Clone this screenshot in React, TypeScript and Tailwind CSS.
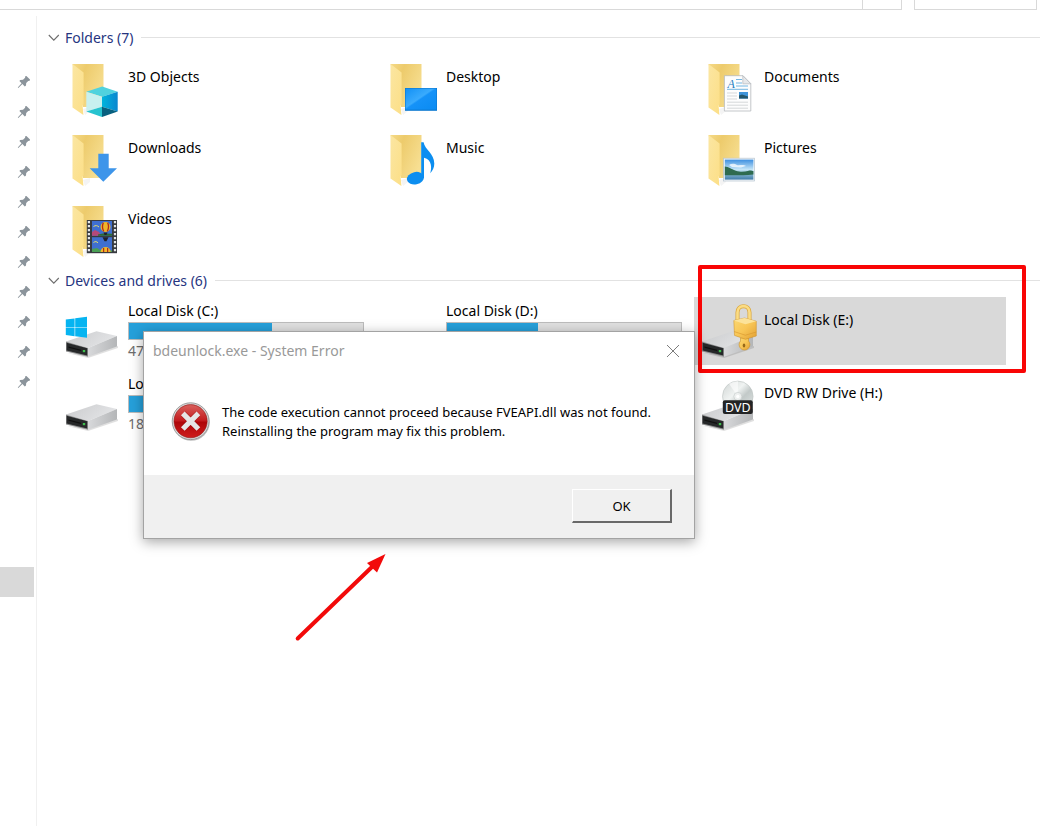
import React from "react";

type IconProps = { children?: React.ReactNode };

function TileSvg({ children }: IconProps) {
  return (
    <svg width="64" height="68" viewBox="0 0 64 68" className="shrink-0" aria-hidden="true">
      {children}
    </svg>
  );
}

function Folder({ children }: IconProps) {
  return (
    <TileSvg>
      <path d="M19 55l7-2v4l-5 4z" fill="#f4f4f4" />
      <path d="M8.5 10H39.5V53H19z" fill="url(#folderBack)" />
      <path d="M8.5 10L19.6 18.5V50L18.6 51.5L19.4 61L8.5 53.5z" fill="url(#folderFront)" />
      {children}
    </TileSvg>
  );
}

function DriveBody() {
  return (
    <>
      <path d="M3 56L24 61L54 51V49L24 58z" fill="#000" opacity="0.12" />
      <path d="M2 44.5L32.5 34.2L53 39L24 51z" fill="url(#driveTop)" />
      <path d="M24 51L53 39V49.5L24 59.7z" fill="url(#driveSide)" />
      <path d="M2 44.5L24 51V59.7L2 54.5z" fill="#8d8e8f" />
      <path d="M2.6 45.8L23.2 51.2V58.4L2.6 53.5z" fill="#262829" />
      <path d="M4.5 49.5L17 52.7V54L4.5 50.8z" fill="#111" />
      <rect x="18.8" y="53" width="2.4" height="2.2" fill="#3fbf4e" />
    </>
  );
}

function Defs() {
  return (
    <svg width="0" height="0" className="absolute" aria-hidden="true">
      <defs>
        <linearGradient id="folderBack" x1="0" y1="0" x2="1" y2="0.6">
          <stop offset="0" stopColor="#f5da88" />
          <stop offset="0.35" stopColor="#edcb6c" />
          <stop offset="1" stopColor="#f7df92" />
        </linearGradient>
        <linearGradient id="folderFront" x1="0" y1="0" x2="1" y2="1">
          <stop offset="0" stopColor="#fbe6a2" />
          <stop offset="1" stopColor="#fcdf87" />
        </linearGradient>
        <linearGradient id="driveTop" x1="0" y1="0" x2="1" y2="0.4">
          <stop offset="0" stopColor="#c9cacc" />
          <stop offset="1" stopColor="#e3e4e6" />
        </linearGradient>
        <linearGradient id="driveSide" x1="0" y1="0" x2="1" y2="0">
          <stop offset="0" stopColor="#d8d9db" />
          <stop offset="1" stopColor="#b4b6b8" />
        </linearGradient>
        <linearGradient id="cubeRight" x1="0" y1="0" x2="1" y2="0">
          <stop offset="0" stopColor="#00b4dc" />
          <stop offset="1" stopColor="#0a86cf" />
        </linearGradient>
        <linearGradient id="screen" x1="0" y1="0" x2="1" y2="1">
          <stop offset="0" stopColor="#1290f5" />
          <stop offset="0.45" stopColor="#3aabfd" />
          <stop offset="0.5" stopColor="#1592f8" />
          <stop offset="1" stopColor="#0a8bf2" />
        </linearGradient>
        <linearGradient id="sky" x1="0" y1="0" x2="0" y2="1">
          <stop offset="0" stopColor="#3d8fe0" />
          <stop offset="0.5" stopColor="#c6e6f8" />
          <stop offset="0.62" stopColor="#9cc8dd" />
          <stop offset="1" stopColor="#3f7ba8" />
        </linearGradient>
        <linearGradient id="gold" x1="0" y1="0" x2="1" y2="1">
          <stop offset="0" stopColor="#fbd873" />
          <stop offset="0.5" stopColor="#f8c656" />
          <stop offset="1" stopColor="#e2a033" />
        </linearGradient>
        <linearGradient id="disc" x1="0" y1="0" x2="1" y2="1">
          <stop offset="0" stopColor="#cfd4d3" />
          <stop offset="0.4" stopColor="#f0f3f2" />
          <stop offset="0.6" stopColor="#c2c9c8" />
          <stop offset="1" stopColor="#e4e8e7" />
        </linearGradient>
        <linearGradient id="errorRed" x1="0" y1="0" x2="0" y2="1">
          <stop offset="0" stopColor="#d9605c" />
          <stop offset="0.5" stopColor="#c2191c" />
          <stop offset="0.52" stopColor="#ad0508" />
          <stop offset="1" stopColor="#cf1d1d" />
        </linearGradient>
      </defs>
    </svg>
  );
}

function ObjectsIcon() {
  return (
    <Folder>
      <path d="M22.3 37.7L38.2 32.6L53.7 37.7L38 42.7z" fill="#4fd2de" />
      <path d="M22.3 37.7L38 42.7V52.7L22.3 57.6z" fill="#c8f0ef" />
      <path d="M53.7 37.7L38 42.7V52.7L53.7 57.6z" fill="url(#cubeRight)" />
      <path d="M22.3 57.6L38 52.7V63z" fill="#27c3cf" />
      <path d="M53.7 57.6L38 52.7V63z" fill="#08607f" />
    </Folder>
  );
}

function DesktopIcon() {
  return (
    <Folder>
      <rect x="23" y="34" width="32" height="22.8" fill="#0b78d0" />
      <rect x="23.6" y="34.6" width="30.8" height="21" fill="url(#screen)" />
    </Folder>
  );
}

function DocumentsIcon() {
  return (
    <Folder>
      <path d="M24.4 21.7H43L50.8 29.6V57H24.4z" fill="#fdfdfd" stroke="#b5b9bd" strokeWidth="0.8" />
      <path d="M42.8 21.7V29.8H50.8z" fill="#e6e8ea" stroke="#b5b9bd" strokeWidth="0.7" />
      <text x="27.5" y="33.5" fontFamily="Liberation Serif, serif" fontStyle="italic" fontSize="12" fill="#1e7fc0">
        A
      </text>
      <path d="M36 25.5h6M36 29h6M36 32h12M27 35.3h21" stroke="#4fa3da" strokeWidth="0.8" />
      <path d="M27 39h10M27 42h10M27 45h10M27 48.2h21M27 51.2h21M27 54.2h21" stroke="#c4c7ca" strokeWidth="0.7" />
      <rect x="39" y="38" width="9" height="6.6" fill="#3f94da" />
      <path d="M39 41.6l3-1 6 2v2h-9z" fill="#24566b" />
    </Folder>
  );
}

function DownloadsIcon() {
  return (
    <Folder>
      <path d="M34.3 28.7H44.7V43.3H53L39.3 56.8L25.7 43.3H34.3z" fill="#3d95ea" />
    </Folder>
  );
}

function MusicIcon() {
  return (
    <Folder>
      <ellipse cx="33.4" cy="53.2" rx="8.6" ry="6.2" transform="rotate(-12 33.4 53.2)" fill="#0c8ef0" />
      <path
        d="M39.2 17.3H41.6C42.6 24.5 52.3 28.5 52.3 38.5C52.3 42.6 50.6 46 48.2 48.2C49.8 43.6 50.3 34.6 42 32.8V53H39.2z"
        fill="#0c8ef0"
      />
    </Folder>
  );
}

function PicturesIcon() {
  return (
    <Folder>
      <rect x="23.6" y="33.2" width="31" height="22.8" fill="#f5f8fb" stroke="#b4c3cf" strokeWidth="0.7" />
      <rect x="24.8" y="34.6" width="28.6" height="20" fill="url(#sky)" />
      <path d="M29 40c3-2 6-1 8 0s6-1 9 1l-5 1.5-9-.5z" fill="#fff" opacity="0.75" />
      <path d="M24.8 41.5c4 .2 6 2.5 11 4.2s9 1 12 .2 3.5-.4 5.6.2V49.5c-10 1-18 .8-28.6.8z" fill="#2f6b4f" />
    </Folder>
  );
}

function VideosIcon() {
  return (
    <Folder>
      <rect x="22.8" y="24" width="30.2" height="33.2" fill="#383b40" />
      <path d="M24.9 25v32M51 25v32" stroke="#e4e6e8" strokeWidth="2.2" strokeDasharray="2.2 1.8" />
      <rect x="28" y="25" width="20" height="14.8" fill="#3f6fd0" />
      <rect x="28" y="41.2" width="20" height="14.8" fill="#3f6fd0" />
      <path d="M28 36l3-2 4 2 2 3.8H28z" fill="#b6497a" />
      <path d="M34 38.4l5-1 9 .4v2H34z" fill="#2b6b33" />
      <path d="M28 53l5-1 3 2 12 .6V56H28z" fill="#4a9f55" />
      <circle cx="41.5" cy="31" r="5" fill="#efb62a" />
      <path d="M39.3 26.8c-1 2.4-1 6 .4 8.6M43.7 26.8c1 2.4 1 6-.4 8.6" stroke="#b32a1a" strokeWidth="1.3" fill="none" />
      <path d="M39.5 36.5h4l-1 2.4h-2z" fill="#20222a" />
      <path d="M38.5 41.2h6l-2 4h-2z" fill="#20222a" />
      <path d="M36.6 56a5 5 0 0 1 10 0z" fill="#efb62a" />
      <path d="M39.6 52v4M43.6 52v4" stroke="#b32a1a" strokeWidth="1.2" />
      <path d="M29.5 30.5c2-1.4 4-1 5.5.5M29.5 46.5c2-1.4 3-1 4.5.3" stroke="#e8e06a" strokeWidth="1" fill="none" />
    </Folder>
  );
}

function DriveIcon() {
  return (
    <TileSvg>
      <DriveBody />
    </TileSvg>
  );
}

function WindowsDriveIcon() {
  return (
    <TileSvg>
      <DriveBody />
      <path d="M1.8 22.5L10.6 21.4V29.9H1.8zM11.2 21.3L23 19.8V29.9H11.2zM1.8 30.6H10.6V39.2L1.8 38zM11.2 30.6H23V40.8L11.2 39.3z" fill="#06b4f1" />
    </TileSvg>
  );
}

function LockedDriveIcon() {
  return (
    <TileSvg>
      <DriveBody />
      <path d="M37.5 27V15.5c0-8.5 12-8.5 12 0V25" fill="none" stroke="#dba63a" strokeWidth="4" />
      <path d="M37.5 27V15.5c0-8.5 12-8.5 12 0V25" fill="none" stroke="#fbdc84" strokeWidth="2.6" />
      <path d="M40.5 41h8v3a5.4 5.4 0 1 1-8 0z" fill="url(#gold)" stroke="#cf9227" strokeWidth="0.6" />
      <ellipse cx="44" cy="48.5" rx="1.3" ry="2" fill="#97691a" />
      <path d="M33.8 23.5L44.5 21L56.3 24.2V39L45.5 42.3L34.5 38.4z" fill="url(#gold)" stroke="#c98d25" strokeWidth="0.5" />
      <path d="M33.8 23.5L44.5 21L56.3 24.2L45.4 27.2z" fill="#fce39a" />
      <path d="M34.2 34.6L45.4 38.2L56.3 35" fill="none" stroke="#d6962b" strokeWidth="0.6" />
    </TileSvg>
  );
}

function DvdDriveIcon() {
  return (
    <TileSvg>
      <DriveBody />
      <circle cx="37.8" cy="26.4" r="15.3" fill="url(#disc)" stroke="#bcc2c1" strokeWidth="0.6" />
      <path d="M37.8 26.4L29 13.8a15.3 15.3 0 0 1 9-2.6z" fill="#fff" opacity="0.6" />
      <circle cx="37.8" cy="26.4" r="4" fill="#eef1f0" stroke="#c3c8c7" strokeWidth="0.6" />
      <circle cx="37.8" cy="26.4" r="1.6" fill="#fff" />
      <rect x="22.8" y="30.2" width="30" height="13.8" rx="2" fill="#232425" />
      <text x="37.8" y="41.6" textAnchor="middle" fontFamily="Noto Sans, sans-serif" fontSize="12.5" fill="#fff">
        DVD
      </text>
    </TileSvg>
  );
}

function PinIcon() {
  return (
    <svg width="14" height="14" viewBox="0 0 14 14" aria-hidden="true">
      <path
        d="M8.2 1.2L9.4 .9L13 4.6L12.7 5.8L11.2 5.9L9.2 8L9 10.6L7.8 11.4L5.4 9L1.6 12.8L.9 12.9L1 12.2L4.6 8.2L2.4 6L3.2 4.9L6 4.7L8.1 2.7z"
        fill="#8b949b"
      />
    </svg>
  );
}

function ErrorIcon() {
  return (
    <svg width="40" height="40" viewBox="0 0 40 40" className="shrink-0" aria-hidden="true">
      <circle cx="20.2" cy="20.2" r="18.6" fill="#000" opacity="0.25" />
      <circle cx="19.6" cy="19.2" r="18.4" fill="#dcdcdc" stroke="#8b8b8b" strokeWidth="0.8" />
      <circle cx="19.6" cy="19.2" r="16.6" fill="url(#errorRed)" stroke="#8e1010" strokeWidth="0.6" />
      <path d="M12.2 11.8L27 26.6M27 11.8L12.2 26.6" stroke="#8f0a0a" strokeWidth="6.4" opacity="0.5" />
      <path d="M11.8 11.4L27.4 27M27.4 11.4L11.8 27" stroke="#e6e6e6" strokeWidth="5.2" />
    </svg>
  );
}

const folders = [
  { name: "3D Objects", Icon: ObjectsIcon },
  { name: "Desktop", Icon: DesktopIcon },
  { name: "Documents", Icon: DocumentsIcon },
  { name: "Downloads", Icon: DownloadsIcon },
  { name: "Music", Icon: MusicIcon },
  { name: "Pictures", Icon: PicturesIcon },
  { name: "Videos", Icon: VideosIcon },
];

type Drive = {
  name: string;
  Icon: () => React.JSX.Element;
  used?: number;
  free?: string;
  selected?: boolean;
};

const drives: Drive[] = [
  { name: "Local Disk (C:)", Icon: WindowsDriveIcon, used: 61, free: "47" },
  { name: "Local Disk (D:)", Icon: DriveIcon, used: 39 },
  { name: "Local Disk (E:)", Icon: LockedDriveIcon, selected: true },
  { name: "Lo", Icon: DriveIcon, used: 50, free: "18" },
  { name: "", Icon: DriveIcon, used: 50 },
  { name: "DVD RW Drive (H:)", Icon: DvdDriveIcon },
];

function GroupHeader({ title }: { title: string }) {
  return (
    <div className="flex h-[33px] items-center pr-[6px] pl-[11px]">
      <svg width="12" height="8" viewBox="0 0 12 8" className="mr-[5px]" aria-hidden="true">
        <path d="M.8 1L5.8 6.2L10.8 1" fill="none" stroke="#6d6d6d" strokeWidth="1.1" />
      </svg>
      <h2 className="text-[#26357f]">{title}</h2>
      <div className="ml-2 h-px flex-1 bg-[#e2e2e2]" />
    </div>
  );
}

function DriveTile({ name, Icon, used, free, selected }: Drive) {
  return (
    <li className={selected ? "relative flex h-[68px] bg-[#d9d9d9] px-[6px]" : "flex h-[68px] px-[6px]"}>
      <Icon />
      {used === undefined ? (
        <span className="pt-[13px]">{name}</span>
      ) : (
        <div className="flex-1 pt-1">
          <div className="h-5">{name}</div>
          <div className="mt-px h-[18px] border border-[#bcbcbc] bg-[#e0e0e0]">
            <div className="h-full bg-[#26a0da]" style={{ width: `${used}%` }} />
          </div>
          <div className="mt-px text-[#6d6d6d]">{free}</div>
        </div>
      )}
      {selected && (
        <div className="pointer-events-none absolute -top-8 -right-5 -bottom-2 left-1 rounded-xs border-4 border-[#f90505]" />
      )}
    </li>
  );
}

function ErrorDialog() {
  return (
    <div
      role="dialog"
      aria-labelledby="dialog-title"
      className="absolute top-[331px] left-[143px] w-[552px] border border-[#a3a3a3] bg-white shadow-[0_3px_12px_rgba(0,0,0,0.35)]"
    >
      <div className="flex h-[38px] items-center justify-between pr-[14px] pl-[9px]">
        <h1 id="dialog-title" className="text-[#999]">
          bdeunlock.exe - System Error
        </h1>
        <button type="button" aria-label="Close">
          <svg width="14" height="14" viewBox="0 0 14 14" aria-hidden="true">
            <path d="M1 1L13 13M13 1L1 13" stroke="#7c7c7c" strokeWidth="1" />
          </svg>
        </button>
      </div>
      <div className="flex h-[105px] gap-[11px] pt-8 pl-[27px]">
        <ErrorIcon />
        <p className="pt-px text-[13px] leading-[19px] text-black">
          The code execution cannot proceed because FVEAPI.dll was not found.
          <br />
          Reinstalling the program may fix this problem.
        </p>
      </div>
      <div className="flex h-[63px] justify-end bg-[#f0f0f0] pt-[14px] pr-[22px]">
        <button
          type="button"
          className="h-[34px] w-[100px] border-t border-r-2 border-b-2 border-l border-t-white border-r-[#696969] border-b-[#696969] border-l-white bg-[#f0f0f0] text-[13px] text-black"
        >
          OK
        </button>
      </div>
    </div>
  );
}

export default function App() {
  return (
    <div className="relative flex min-h-screen flex-col bg-white font-['Noto_Sans',sans-serif] text-[14px] leading-5 text-black">
      <Defs />
      <header className="flex h-[10px] gap-3 pr-[9px]">
        <div className="flex flex-1 justify-end border-r border-b border-[#d9d9d9]">
          <div className="w-[39px] border-l border-[#d9d9d9]" />
        </div>
        <div className="w-[123px] border-x border-b border-[#d9d9d9]" />
      </header>

      <div className="flex flex-1">
        <aside className="mt-[6px] w-[37px] border-r border-[#f0f0f0]">
          <ul className="pt-[51px]">
            {Array.from({ length: 11 }, (_, i) => (
              <li key={i} className="flex h-[30px] items-center pl-[17px]">
                <PinIcon />
              </li>
            ))}
          </ul>
          <div className="mt-[170px] mr-[2px] h-[30px] bg-[#d9d9d9]" />
        </aside>

        <main className="flex-1 pt-[11px]">
          <GroupHeader title="Folders (7)" />
          <ul className="grid grid-cols-[repeat(auto-fill,312px)] gap-x-[6px] gap-y-[3px] pl-[21px]">
            {folders.map(({ name, Icon }) => (
              <li key={name} className="flex h-[68px] px-[6px]">
                <Icon />
                <span className="pt-[13px]">{name}</span>
              </li>
            ))}
          </ul>
          <GroupHeader title="Devices and drives (6)" />
          <ul className="grid grid-cols-[repeat(auto-fill,312px)] gap-x-[6px] gap-y-[5px] pl-[21px]">
            {drives.map((drive) => (
              <DriveTile key={drive.name} {...drive} />
            ))}
          </ul>
        </main>
      </div>

      <ErrorDialog />

      <svg width="100" height="100" viewBox="0 0 100 100" className="pointer-events-none absolute top-[545px] left-[290px]" aria-hidden="true">
        <path d="M7.7 93.5L84 20" stroke="#f20a0a" strokeWidth="4" strokeLinecap="round" />
        <path d="M95.5 9L77 18L87 27.5z" fill="#f20a0a" />
      </svg>
    </div>
  );
}
